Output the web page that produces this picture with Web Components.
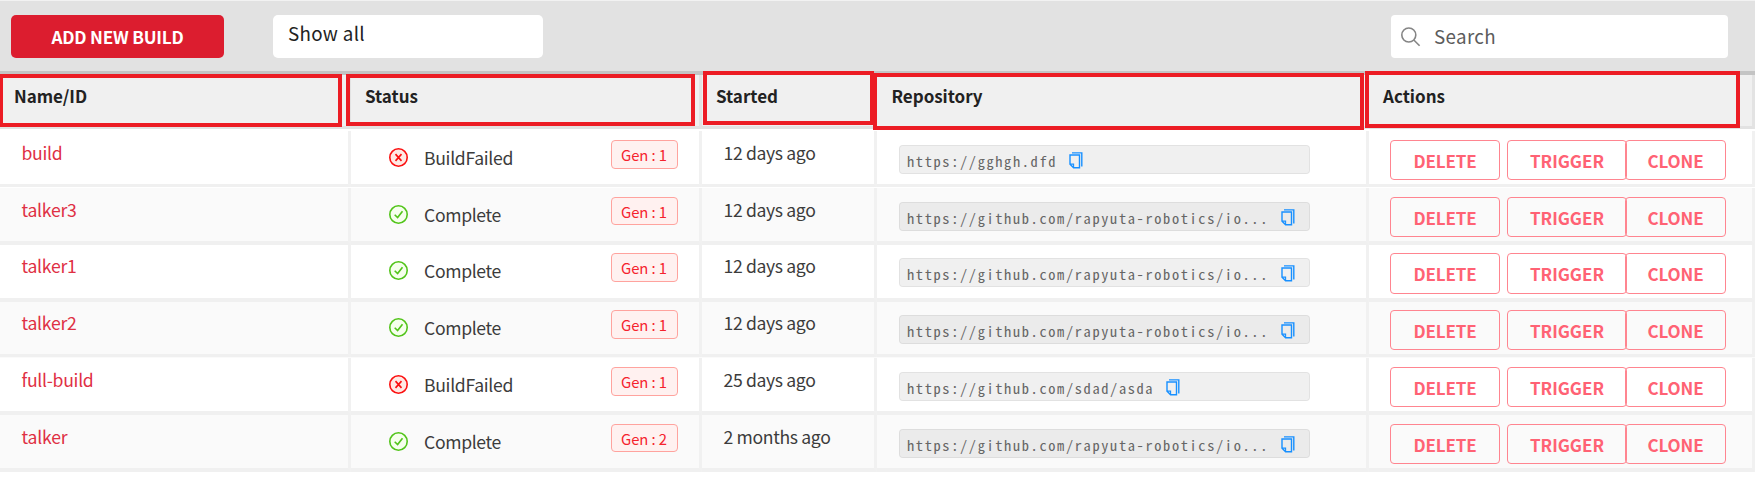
<!DOCTYPE html>
<html lang="en">
<head>
<meta charset="utf-8">
<title>Builds</title>
<style>
body { margin: 0; background: #fff; overflow: hidden; font-family: "Noto Sans CJK SC", "Open Sans", sans-serif; font-size: 17.6px; line-height: 20px; color: #3c3c3c; }
</style>
</head>
<body>
<builds-page></builds-page>
<script>
const define = (name, html, setup) => customElements.define(name, class extends HTMLElement {
  connectedCallback() {
    if (this.shadowRoot) return;
    const t = document.createElement('template');
    t.innerHTML = typeof html === 'function' ? html(this) : html;
    this.attachShadow({ mode: 'open' }).appendChild(t.content.cloneNode(true));
    if (setup) setup(this);
  }
});

/* Single line label; "fit" spreads the letters over a given width. */
define('ui-label', `<style>:host{display:inline-block;white-space:nowrap}span{display:inline-block}</style><span><slot></slot></span>`, el => {
  const fit = parseFloat(el.getAttribute('fit'));
  if (!fit) return;
  const span = el.shadowRoot.querySelector('span');
  const n = el.textContent.length;
  const w = span.getBoundingClientRect().width;
  span.style.letterSpacing = ((fit - w) / n).toFixed(3) + 'px';
});

define('primary-button', `<style>:host{display:flex;align-items:center;justify-content:center;box-sizing:border-box;width:213px;height:43px;border-radius:5px;background:#dc1d2f;color:#fff;font-weight:700;font-size:17.2px;padding-top:1px}</style><slot></slot>`);

define('filter-select', `<style>:host{display:block;box-sizing:border-box;width:270px;height:43px;border-radius:5px;background:#fff;color:#222;font-size:18.8px;padding:8px 15px}</style><slot></slot>`);

define('search-field', `<style>
:host{display:flex;box-sizing:border-box;width:337px;height:43px;border-radius:4px;background:#fff;color:#5c5c5c;font-size:18.8px;padding:11px 9px}
svg{margin:0 13px 0 0;flex:none}</style>
<svg width="21" height="21" viewBox="0 0 21 21" fill="none" stroke="#858585" stroke-width="1.6"><circle cx="8.8" cy="9" r="7"/><path d="M13.8 14L19.6 19.8"/></svg><slot></slot>`);

define('tool-bar', `<style>:host{display:flex;box-sizing:border-box;height:75px;padding:14px 27px 0 11px;background:#e2e2e2;border-top:1px solid #f2f2f2;border-bottom:4px solid #c4c4c4}
filter-select{margin-left:49px}search-field{margin-left:auto}</style>
<primary-button><ui-label fit="132">ADD NEW BUILD</ui-label></primary-button>
<filter-select><ui-label fit="77">Show all</ui-label></filter-select>
<search-field><ui-label fit="62">Search</ui-label></search-field>`);

define('head-cell', `<style>:host{display:block;position:relative;box-sizing:border-box;padding:11px 0 0 var(--pad);border-right:3px solid #e3e3e3;border-bottom:3px solid #e2e2e2;font-size:17px;font-weight:700;color:#222}
i{position:absolute;box-sizing:border-box;border:4px solid #ec1c24;top:var(--t);left:var(--l);width:var(--w);height:var(--h)}</style><slot></slot><i></i>`);

define('table-head', `<style>:host{display:grid;grid-template-columns:351px 351px 175px 492px 386px;height:54px;background:#f0f0f0}</style>
<head-cell style="--pad:14px;--t:-1px;--l:-1px;--w:343px;--h:53px"><ui-label fit="73">Name/ID</ui-label></head-cell>
<head-cell style="--pad:14px;--t:-1px;--l:-5px;--w:349px;--h:52px"><ui-label fit="53">Status</ui-label></head-cell>
<head-cell style="--pad:14px;--t:-4px;--l:1px;--w:171px;--h:54px"><ui-label fit="62">Started</ui-label></head-cell>
<head-cell style="--pad:14.5px;--t:-2px;--l:-4px;--w:491px;--h:57px"><ui-label fit="91">Repository</ui-label></head-cell>
<head-cell style="--pad:14px;--t:-4px;--l:-4px;--w:375px;--h:57px"><ui-label fit="62">Actions</ui-label></head-cell>`);

define('status-icon', el => `<style>:host{display:block;width:19px;height:19px}svg{display:block}</style><svg width="19" height="19" viewBox="0.5 0.5 19 19" fill="none" stroke-width="1.6">` +
 (el.hasAttribute('failed')
  ? `<circle cx="10" cy="10" r="8.7" fill="#ffe9e4" stroke="#fb1010"/><path d="M7 6.6L13 13.4M13 6.6L7 13.4" stroke="#fb1010" stroke-width="1.6"/>`
  : `<circle cx="10" cy="10" r="8.7" fill="#f6ffed" stroke="#52c41a"/><path d="M6.2 10.2L9.1 13.1L14 6.7" stroke="#52c41a" stroke-width="1.6"/>`) + `</svg>`);

define('gen-tag', `<style>:host{display:block;box-sizing:border-box;width:67px;height:var(--gh,29px);border:1px solid #ffa39e;border-radius:4px;background:#fff1f0;color:#f5222d;font-size:14.8px;line-height:20px;padding:4px 0 0 9px}</style><slot></slot>`);

define('repo-link', `<style>:host{display:flex;box-sizing:border-box;width:411px;height:29px;border:1px solid rgba(0,0,0,.06);border-radius:4px;background:rgba(0,0,0,.06);color:#666;padding:5px 0 0 7px;font-family:"Noto Sans Mono CJK SC","Liberation Mono",monospace;font-size:14.4px}
svg{margin:1px 0 0 12px}</style><slot></slot>
<svg width="14" height="17" viewBox="0 0 14 17" fill="none" stroke="#1890ff" stroke-width="1.4"><path d="M3 .9H12.8V14.4"/><path d="M1 3H10.5V15.7H4.6L1 12.1Z"/><path d="M1 12.1H4.6V15.7" stroke-width="1.1"/></svg>`);

define('action-button', `<style>:host{display:flex;align-items:center;justify-content:center;box-sizing:border-box;height:var(--bh,40px);border:1px solid #ff8590;border-radius:4px;color:#ff6274;font-weight:700;font-size:17px;padding-top:1px}</style><slot></slot>`);

define('build-row', el => {
  const a = n => el.getAttribute(n);
  return `<style>
:host{display:grid;grid-template-columns:351px 351px 175px 492px 386px;box-sizing:border-box;height:57px}
:host([alt]){background:#fafafa}
:host([short]){height:56px}
:host([thin]) .c{border-bottom-width:3px;margin-bottom:1px}
.c{box-sizing:border-box;border-right:3px solid #f1f1f1;border-bottom:4px solid #f0f0f0;display:flex;align-items:flex-start;min-width:0}
.name{padding:calc(12px + var(--dy,0px)) 0 0 21.5px;color:#df3044}
.status{padding:calc(9px + var(--dy,0px)) 21px 0 38px}
.status status-icon{margin-top:8px}
.status > ui-label{margin:8px auto 0 16px}
.time{padding:calc(12px + var(--dy,0px)) 0 0 21.5px}
.repo{padding:calc(14px + var(--dy,0px)) 0 0 22px}
.act{padding:calc(9px + var(--dy,0px)) 0 0 21px}
.d{width:110px;margin-right:7px}.t{width:120px}.k{width:101px;margin-left:-2px}
</style>
<div class="c name"><ui-label fit="${a('nw')}">${a('name')}</ui-label></div>
<div class="c status"><status-icon ${a('status') === 'BuildFailed' ? 'failed' : ''}></status-icon><ui-label fit="${a('status') === 'BuildFailed' ? 89 : 77}">${a('status')}</ui-label><gen-tag><ui-label fit="46">Gen : ${a('gen')}</ui-label></gen-tag></div>
<div class="c time"><ui-label fit="${a('tw')}">${a('time')}</ui-label></div>
<div class="c repo"><repo-link><ui-label fit="${(a('repo').length * 8.83).toFixed(1)}">${a('repo')}</ui-label></repo-link></div>
<div class="c act"><action-button class="d"><ui-label fit="63">DELETE</ui-label></action-button><action-button class="t"><ui-label fit="74">TRIGGER</ui-label></action-button><action-button class="k"><ui-label fit="56">CLONE</ui-label></action-button></div>`;
});

define('builds-page', `<style>:host{display:block;width:1755px}.rows{padding-top:2px}</style>
<tool-bar></tool-bar><table-head></table-head>
<div class="rows">
<build-row thin name="build" nw="41" status="BuildFailed" gen="1" time="12 days ago" tw="92" repo="https://gghgh.dfd"></build-row>
<build-row alt style="--gh:28px" name="talker3" nw="55" status="Complete" gen="1" time="12 days ago" tw="92" repo="https://github.com/rapyuta-robotics/io..."></build-row>
<build-row style="--dy:-1px;--bh:41px" name="talker1" nw="55" status="Complete" gen="1" time="12 days ago" tw="92" repo="https://github.com/rapyuta-robotics/io..."></build-row>
<build-row alt thin short style="--dy:-1px" name="talker2" nw="55" status="Complete" gen="1" time="12 days ago" tw="92" repo="https://github.com/rapyuta-robotics/io..."></build-row>
<build-row name="full-build" nw="72" status="BuildFailed" gen="1" time="25 days ago" tw="92" repo="https://github.com/sdad/asda"></build-row>
<build-row alt style="--gh:28px" name="talker" nw="46" status="Complete" gen="2" time="2 months ago" tw="107" repo="https://github.com/rapyuta-robotics/io..."></build-row>
</div>`);
</script>
</body>
</html>
